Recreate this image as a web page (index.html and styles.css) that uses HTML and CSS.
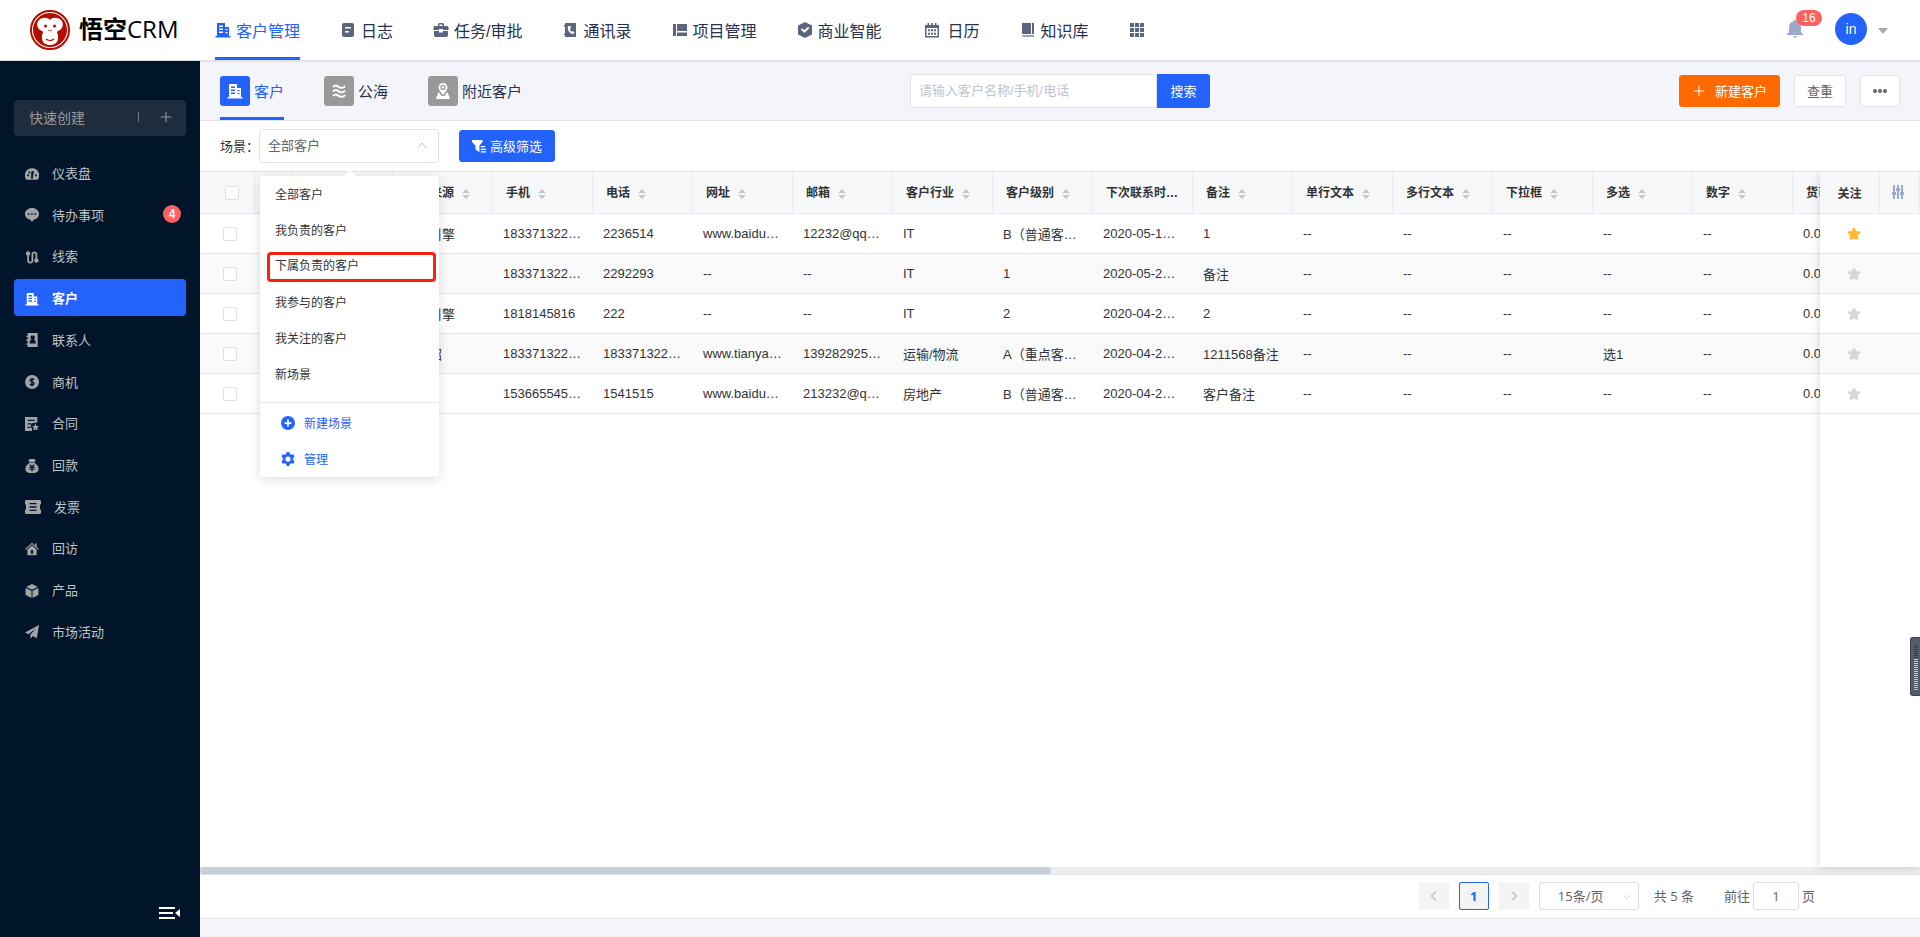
FILE: index.html
```html
<!DOCTYPE html>
<html lang="zh-CN">
<head>
  <meta charset="UTF-8">
  <meta name="viewport" content="width=device-width, initial-scale=1.0">
  <title>悟空CRM</title>
  <link rel="stylesheet" href="styles.css">
</head>
<body>
  <!-- Icon sprite -->
  <svg class="sprite" aria-hidden="true">
    <symbol id="i-building" viewBox="0 0 16 16"><path fill-rule="evenodd" d="M2 1h8v4h4v9h1.500v1.500h-15V14H2zM4 3.500V5h4V3.500zm0 3V8h4V6.500zm0 3V11h4V9.500zM10.500 7v1.300h2V7zm0 3v1.300h2V10z"/></symbol>
    <symbol id="i-log" viewBox="0 0 16 16"><path fill-rule="evenodd" d="M4 1h8a2 2 0 0 1 2 2v10a2 2 0 0 1-2 2H4a2 2 0 0 1-2-2V3a2 2 0 0 1 2-2zm1 4v1.500h6V5zm0 4v1.500h4V9z"/></symbol>
    <symbol id="i-case" viewBox="0 0 16 16"><path fill-rule="evenodd" d="M5 4V2.500A1.500 1.500 0 0 1 6.500 1h3A1.500 1.500 0 0 1 11 2.500V4h3.500l1 1v3H10V7H6v1H.500V5l1-1zm1.500 0h3V2.500h-3zM1 9h5v1.500h4V9h5v4.500L14 15H2l-1-1.500z"/></symbol>
    <symbol id="i-phone" viewBox="0 0 16 16"><path fill-rule="evenodd" d="M3 1h11v14H3v-2H2v-1.500h1v-7H2V3h1zm3 3c-1 4 1.500 8 5.500 8l1-1.800-2-1.200-1 .8C8.500 9.300 8 8 8 7l1-.7L8.300 4z"/></symbol>
    <symbol id="i-project" viewBox="0 0 16 16"><path d="M1 2h3v12H1zM5 2h10v7H5zM5 10.500h10V14H5z"/></symbol>
    <symbol id="i-bi" viewBox="0 0 16 16"><path fill-rule="evenodd" d="M8 0l7 3.500v9L8 16l-7-3.500v-9zM4 7.500l3.300 3.500L12.500 6 11 4.800 7.300 8.300 5.300 6.300z"/></symbol>
    <symbol id="i-calendar" viewBox="0 0 16 16"><path fill-rule="evenodd" d="M3.500 1H5v2h2.200V1h1.600v2H11V1h1.500v2H15v12.500H1V3h2.500zM2.500 6v8h11V6zM4 7.300h2v2H4zm3 0h2v2H7zm3 0h2v2h-2zm-6 3.400h2v2H4zm3 0h2v2H7zm3 0h2v2h-2z"/></symbol>
    <symbol id="i-book" viewBox="0 0 16 16"><path d="M2 1h9v11H2zM12 1h2v11h-2z"/><path opacity=".6" d="M2 13h12v2H3z"/></symbol>
    <symbol id="i-grid" viewBox="0 0 16 16"><path d="M1 1h4v4H1zM6 1h4v4H6zM11 1h4v4h-4zM1 6h4v4H1zM6 6h4v4H6zM11 6h4v4h-4zM1 11h4v4H1zM6 11h4v4H6zM11 11h4v4h-4z"/></symbol>
    <symbol id="i-bell" viewBox="0 0 16 18"><path d="M8 0c1 0 1.500.6 1.500 1.300C12.500 2 14 4.500 14 7.500V12l2 2v1H0v-1l2-2V7.500C2 4.500 3.500 2 6.500 1.300 6.500.6 7 0 8 0zM5.500 16h5L8 18z"/></symbol>
    <symbol id="i-wave" viewBox="0 0 16 16"><path fill="none" stroke="currentColor" stroke-width="2" d="M2 4c3-3 4-1 6 0s4 2 6-1M2 8.500c3-3 4-1 6 0s4 2 6-1M2 13c3-3 4-1 6 0s4 2 6-1"/></symbol>
    <symbol id="i-map" viewBox="0 0 16 18"><path fill-rule="evenodd" d="M8 0a5 5 0 0 1 5 5c0 3-3 5.500-5 8.500C6 10.500 3 8 3 5a5 5 0 0 1 5-5zm0 2a3 3 0 1 0 0 6 3 3 0 0 0 0-6z"/><path d="M3 10l3.500 4.500h3L13 10l3 8H0z"/><circle cx="8" cy="5" r="1.500"/></symbol>
    <symbol id="i-gauge" viewBox="0 0 16 16"><path fill-rule="evenodd" d="M8 1.500A8 8 0 0 1 14.500 14.500h-13A8 8 0 0 1 8 1.500zM2.500 8.500v2h2v-2zM4 5v2h2V5zM11.500 8.500v2h2v-2zM7.300 5L7 11.500v2h2v-2L10.300 4.500z"/></symbol>
    <symbol id="i-chat" viewBox="0 0 16 16"><path fill-rule="evenodd" d="M8 0c4.500 0 8 2.900 8 6.700s-2.500 6.200-6 6.700l-2 2.600-2-2.600c-3.500-.5-6-2.900-6-6.700S3.500 0 8 0zM3.200 6v1.800h1.900V6zm3.800 0v1.800h1.900V6zm3.800 0v1.800h1.900V6z"/></symbol>
    <symbol id="i-clue" viewBox="0 0 16 16"><path fill="none" stroke="currentColor" stroke-width="2" d="M3.500 4v8a2.500 2.500 0 0 0 5 0V4a2.500 2.500 0 0 1 4.500 0v8"/><circle cx="3.500" cy="4" r="2.500"/><circle cx="13" cy="12" r="2.500"/></symbol>
    <symbol id="i-contact" viewBox="0 0 16 16"><path fill-rule="evenodd" d="M3 0h11.500v16H3v-2.500H1.500V12H3V9H1.500V7.500H3V4.500H1.500V3H3zm5.800 3a2.200 2.200 0 0 0-1.200 4.200C6 8 5.300 9.500 5.300 12h7c0-2.500-.7-4-2.300-4.800A2.200 2.200 0 0 0 8.800 3z"/></symbol>
    <symbol id="i-money" viewBox="0 0 16 16"><circle cx="8" cy="8" r="8"/><path fill="none" stroke="#001529" stroke-width="1.500" d="M10.500 5.500C9 4 5.500 4.500 5.700 6.300 6 8.200 10.300 7.600 10.400 9.700c0 2-3.400 2.200-5 .7M8 3v10"/></symbol>
    <symbol id="i-contract" viewBox="0 0 16 16"><path fill-rule="evenodd" d="M0 0h14v6.500h-3a4 4 0 0 0-3 7V16H0zM3 3v1.500h8V3zm0 4v1.500h4.500V7zm0 4v1.500h3V11z"/><path d="M12 7.500l1.200 2.700 2.800.3-2 1.900.5 3.100L12 14l-2.500 1.500.5-3.100-2-1.900 2.800-.3z"/></symbol>
    <symbol id="i-bag" viewBox="0 0 16 16"><path d="M5 0h6l1 2-1 2H5L4 2zM5 4.500h6c2 1 4.500 3.500 4.500 6.500 0 4-3 5-7.500 5S.500 15 .500 11c0-3 2.500-5.500 4.500-6.500z"/><path fill="none" stroke="#001529" stroke-width="1.300" d="M5.500 6.500L8 9l2.500-2.500M5 9.500h6M5 11.700h6M8 9v5"/></symbol>
    <symbol id="i-ticket" viewBox="0 0 16 14"><path fill-rule="evenodd" d="M1 0h14l1 1v3l-1 1v4l1 1v3l-1 1H1l-1-1v-3l1-1V5L0 4V1zm3.500 3v1.300h7V3zm0 3.300v1.400h7V6.300zm0 3.400V11h7V9.700z"/></symbol>
    <symbol id="i-home" viewBox="0 0 18 16"><path d="M9 0l4 3.500V1h2v4.300L18 8l-1 1-8-7-8 7-1-1z"/><path fill-rule="evenodd" d="M9 3.500l6 5.200V16H3V8.700zM7.500 9.500v4.500h3V9.500z"/></symbol>
    <symbol id="i-box" viewBox="0 0 16 16"><path d="M8 0l6.700 3.300L8 6.700 1.300 3.300zM.700 4.500l6.700 3.300V16L.700 12.500zM15.300 4.500v8L8.600 16V7.800z"/></symbol>
    <symbol id="i-plane" viewBox="0 0 16 16"><path d="M16 0l-2.500 15-5-2.500L6.500 16 6 11l6.500-7L4 10.500 0 8.500z"/></symbol>
    <symbol id="i-filter" viewBox="0 0 16 16"><path d="M0 1h12v2.500L8.500 7.500V15L4 12V7.500L0 3.500zM10 8h5v1.500h-5zM10 11h6v1.500h-6zM10 14h6v1.500h-6z"/></symbol>
    <symbol id="i-plus" viewBox="0 0 16 16"><path d="M7.400 2h1.200v5.400H14v1.200H8.600V14H7.400V8.600H2V7.400h5.400z"/></symbol>
    <symbol id="i-addc" viewBox="0 0 16 16"><path fill-rule="evenodd" d="M8 0a8 8 0 1 1 0 16A8 8 0 0 1 8 0zM7 4v3H4v2h3v3h2V9h3V7H9V4z"/></symbol>
    <symbol id="i-gear" viewBox="0 0 16 16"><path fill-rule="evenodd" d="M6.500 0h3l.6 2.200 1.600 1L14 2.600 15.500 5l-1.600 1.800v2.400L15.500 11 14 13.400l-2.300-.6-1.600 1-.6 2.200h-3l-.6-2.200-1.600-1-2.300.6L.500 11l1.600-1.800V6.800L.500 5 2 2.600l2.300.6 1.600-1zM8 5a3 3 0 1 0 0 6 3 3 0 0 0 0-6z"/></symbol>
    <symbol id="i-star" viewBox="0 0 16 16"><path stroke="currentColor" stroke-width="2" stroke-linejoin="round" d="M8 1.500l1.900 4 4.600.6-3.300 3.100.8 4.500-4-1.100-4 1.100.8-4.500L1.500 6.100l4.600-.6z"/></symbol>
    <symbol id="i-sort" viewBox="0 0 8 10"><path d="M4 0l4 4H0zM0 6h8l-4 4z"/></symbol>
    <symbol id="i-up" viewBox="0 0 12 12"><path fill="none" stroke="currentColor" d="M2 8l4-5 4 5"/></symbol>
    <symbol id="i-down" viewBox="0 0 12 12"><path fill="none" stroke="currentColor" d="M2 4l4 4 4-4"/></symbol>
    <symbol id="i-left" viewBox="0 0 12 12"><path fill="none" stroke="currentColor" stroke-width="2" d="M8 1L3 6l5 5"/></symbol>
    <symbol id="i-right" viewBox="0 0 12 12"><path fill="none" stroke="currentColor" stroke-width="2" d="M4 1l5 5-5 5"/></symbol>
    <symbol id="i-set" viewBox="0 0 12 14"><path d="M1 0h2v14H1zM5 0h2v14H5zM9 0h2v14H9zM0 7h4v3H0zM4 3h4v3H4zM8 7h4v3H8z"/></symbol>
    <symbol id="i-fold" viewBox="0 0 22 12"><path d="M0 0h16v2H0zM0 5h14v2H0zM0 10h16v2H0zM21 2v8l-5-4z"/></symbol>
  </svg>

  <header class="header">
    <a href="#" class="logo">
      <svg width="40" height="40" viewBox="0 0 40 40">
        <circle cx="20" cy="20" r="19" fill="#fff" stroke="#b50d00" stroke-width="2"/>
        <circle cx="20" cy="20" r="17" fill="#b50d00"/>
        <path fill="#fff" d="M20 10c2-3 8-3 11 0 3 3 2 8-1 10-2 1-3 1-3 3 1 1 1 2 1 5 0 5-4 7-8 7s-8-2-8-7c0-3 0-4 1-5 0-2-1-2-3-3-3-2-4-7-1-10 3-3 9-3 11 0z"/>
        <g fill="#b50d00"><circle cx="15.500" cy="16" r="1.500"/><circle cx="24.500" cy="16" r="1.500"/><circle cx="19" cy="20.500" r=".7"/><circle cx="21" cy="20.500" r=".7"/></g>
        <path fill="none" stroke="#b50d00" stroke-width="1.200" d="M16 29q4 3 8 0"/>
      </svg>
      <span><b>悟空</b>CRM</span>
    </a>
    <nav class="nav">
      <a href="#" class="active"><svg><use href="#i-building"/></svg>客户管理</a>
      <a href="#"><svg><use href="#i-log"/></svg>日志</a>
      <a href="#"><svg><use href="#i-case"/></svg>任务/审批</a>
      <a href="#"><svg><use href="#i-phone"/></svg>通讯录</a>
      <a href="#"><svg><use href="#i-project"/></svg>项目管理</a>
      <a href="#"><svg><use href="#i-bi"/></svg>商业智能</a>
      <a href="#" class="spaced"><svg><use href="#i-calendar"/></svg>日历</a>
      <a href="#"><svg><use href="#i-book"/></svg>知识库</a>
      <a href="#" aria-label="更多"><svg><use href="#i-grid"/></svg></a>
    </nav>
    <div class="user">
      <button class="bell" aria-label="消息"><svg><use href="#i-bell"/></svg><span class="bell-count">16</span></button>
      <span class="avatar">in</span>
      <span class="caret"></span>
    </div>
  </header>

  <div class="layout">
    <aside class="sidebar">
      <button class="quick">快速创建<i></i><svg><use href="#i-plus"/></svg></button>
      <nav class="menu">
        <a href="#"><svg><use href="#i-gauge"/></svg>仪表盘</a>
        <a href="#"><svg><use href="#i-chat"/></svg>待办事项<span class="badge">4</span></a>
        <a href="#"><svg><use href="#i-clue"/></svg>线索</a>
        <a href="#" class="active"><svg><use href="#i-building"/></svg>客户</a>
        <a href="#"><svg><use href="#i-contact"/></svg>联系人</a>
        <a href="#"><svg><use href="#i-money"/></svg>商机</a>
        <a href="#"><svg><use href="#i-contract"/></svg>合同</a>
        <a href="#"><svg><use href="#i-bag"/></svg>回款</a>
        <a href="#"><svg class="wide"><use href="#i-ticket"/></svg>发票</a>
        <a href="#"><svg><use href="#i-home"/></svg>回访</a>
        <a href="#"><svg><use href="#i-box"/></svg>产品</a>
        <a href="#"><svg><use href="#i-plane"/></svg>市场活动</a>
      </nav>
      <button class="fold" aria-label="收起"><svg><use href="#i-fold"/></svg></button>
    </aside>

    <main class="main">
      <div class="tabbar">
        <div class="tabs">
          <a href="#" class="active"><span><svg><use href="#i-building"/></svg></span>客户</a>
          <a href="#"><span><svg><use href="#i-wave"/></svg></span>公海</a>
          <a href="#"><span><svg><use href="#i-map"/></svg></span>附近客户</a>
        </div>
        <form class="search">
          <input type="text" placeholder="请输入客户名称/手机/电话" aria-label="搜索客户">
          <button type="button">搜索</button>
        </form>
        <div class="actions">
          <button class="btn btn-orange"><svg><use href="#i-plus"/></svg>新建客户</button>
          <button class="btn">查重</button>
          <button class="btn btn-more" aria-label="更多操作"><i></i><i></i><i></i></button>
        </div>
      </div>

      <div class="filter">
        <label for="scene">场景：</label>
        <div class="scene">
          <select id="scene"><option>全部客户</option></select>
          <svg><use href="#i-up"/></svg>
          <div class="dropdown">
            <ul>
              <li>全部客户</li>
              <li>我负责的客户</li>
              <li class="marked">下属负责的客户</li>
              <li>我参与的客户</li>
              <li>我关注的客户</li>
              <li>新场景</li>
            </ul>
            <div class="dropdown-foot">
              <button><svg><use href="#i-addc"/></svg>新建场景</button>
              <button><svg><use href="#i-gear"/></svg>管理</button>
            </div>
          </div>
        </div>
        <button class="btn btn-blue"><svg><use href="#i-filter"/></svg>高级筛选</button>
      </div>

      <div class="table-area">
        <div class="table-scroll">
          <table class="grid">
            <colgroup><col class="col-check"><col class="col-lock"><col span="16" class="col-data"></colgroup>
            <thead>
              <tr>
                <th class="check"><input type="checkbox" aria-label="全选"></th><th></th><th></th>
                <th>客户来源<svg><use href="#i-sort"/></svg></th>
                <th>手机<svg><use href="#i-sort"/></svg></th>
                <th>电话<svg><use href="#i-sort"/></svg></th>
                <th>网址<svg><use href="#i-sort"/></svg></th>
                <th>邮箱<svg><use href="#i-sort"/></svg></th>
                <th>客户行业<svg><use href="#i-sort"/></svg></th>
                <th>客户级别<svg><use href="#i-sort"/></svg></th>
                <th>下次联系时…</th>
                <th>备注<svg><use href="#i-sort"/></svg></th>
                <th>单行文本<svg><use href="#i-sort"/></svg></th>
                <th>多行文本<svg><use href="#i-sort"/></svg></th>
                <th>下拉框<svg><use href="#i-sort"/></svg></th>
                <th>多选<svg><use href="#i-sort"/></svg></th>
                <th>数字<svg><use href="#i-sort"/></svg></th>
                <th>货币</th>
              </tr>
            </thead>
            <tbody>
              <tr><td class="check"><input type="checkbox" aria-label="选择"></td><td></td><td></td><td>搜索引擎</td><td>183371322…</td><td>2236514</td><td>www.baidu…</td><td>12232@qq…</td><td>IT</td><td>B（普通客…</td><td>2020-05-1…</td><td>1</td><td>--</td><td>--</td><td>--</td><td>--</td><td>--</td><td>0.00</td></tr>
              <tr><td class="check"><input type="checkbox" aria-label="选择"></td><td></td><td></td><td></td><td>183371322…</td><td>2292293</td><td>--</td><td>--</td><td>IT</td><td>1</td><td>2020-05-2…</td><td>备注</td><td>--</td><td>--</td><td>--</td><td>--</td><td>--</td><td>0.00</td></tr>
              <tr><td class="check"><input type="checkbox" aria-label="选择"></td><td></td><td></td><td>搜索引擎</td><td>1818145816</td><td>222</td><td>--</td><td>--</td><td>IT</td><td>2</td><td>2020-04-2…</td><td>2</td><td>--</td><td>--</td><td>--</td><td>--</td><td>--</td><td>0.00</td></tr>
              <tr><td class="check"><input type="checkbox" aria-label="选择"></td><td></td><td></td><td>转介绍</td><td>183371322…</td><td>183371322…</td><td>www.tianya…</td><td>139282925…</td><td>运输/物流</td><td>A（重点客…</td><td>2020-04-2…</td><td>1211568备注</td><td>--</td><td>--</td><td>--</td><td>选1</td><td>--</td><td>0.00</td></tr>
              <tr><td class="check"><input type="checkbox" aria-label="选择"></td><td></td><td></td><td></td><td>153665545…</td><td>1541515</td><td>www.baidu…</td><td>213232@q…</td><td>房地产</td><td>B（普通客…</td><td>2020-04-2…</td><td>客户备注</td><td>--</td><td>--</td><td>--</td><td>--</td><td>--</td><td>0.00</td></tr>
            </tbody>
          </table>
        </div>
        <div class="table-fixed">
          <table class="grid">
            <colgroup><col class="col-follow"><col class="col-set"></colgroup>
            <thead><tr><th>关注</th><th><svg class="set"><use href="#i-set"/></svg></th></tr></thead>
            <tbody>
              <tr><td><svg class="star on"><use href="#i-star"/></svg></td><td></td></tr>
              <tr><td><svg class="star"><use href="#i-star"/></svg></td><td></td></tr>
              <tr><td><svg class="star"><use href="#i-star"/></svg></td><td></td></tr>
              <tr><td><svg class="star"><use href="#i-star"/></svg></td><td></td></tr>
              <tr><td><svg class="star"><use href="#i-star"/></svg></td><td></td></tr>
            </tbody>
          </table>
        </div>
      </div>
      <div class="scrollbar"><div class="scrollbar-thumb"></div></div>

      <div class="pager">
        <button aria-label="上一页"><svg><use href="#i-left"/></svg></button>
        <button class="current">1</button>
        <button aria-label="下一页"><svg><use href="#i-right"/></svg></button>
        <div class="page-size">
          <select aria-label="每页条数"><option>15条/页</option></select>
          <svg><use href="#i-down"/></svg>
        </div>
        <span class="total">共 5 条</span>
        <label class="jump">前往<input type="text" value="1">页</label>
      </div>
    </main>
  </div>

  <div class="meter"><div class="meter-off"></div><div class="meter-on"></div></div>
</body>
</html>
```
FILE: styles.css
```css
* {
  box-sizing: border-box;
}
body {
  margin: 0;
  min-height: 100vh;
  display: flex;
  flex-direction: column;
  font-family: "Liberation Sans", "Noto Sans CJK SC", sans-serif;
  font-size: 13px;
  color: #333;
  background: #f4f5fa;
}
a {
  color: inherit;
  text-decoration: none;
}
button, input, select {
  font: inherit;
  color: inherit;
  margin: 0;
}
button {
  border: none;
  background: none;
  padding: 0;
  cursor: pointer;
}
select {
  appearance: none;
}
svg {
  fill: currentColor;
  flex: none;
}
.sprite {
  display: none;
}

/* Header */
.header {
  display: flex;
  height: 61px;
  background: #fff;
  border-bottom: 1px solid #dfe0e3;
  box-shadow: 0 1px 2px rgba(0, 0, 0, 0.08);
  position: relative;
}
.logo {
  display: flex;
  align-items: center;
  width: 215px;
  padding-left: 30px;
  gap: 9px;
  font-family: "Open Sans", "Noto Sans CJK SC", sans-serif;
  font-size: 24px;
  font-weight: 500;
  line-height: 30px;
  color: #000;
}
.logo span {
  padding-bottom: 2px;
}
.nav {
  display: flex;
  gap: 40px;
  font-size: 16px;
  color: #2a304d;
}
.nav a {
  display: flex;
  align-items: center;
  gap: 5px;
  border-bottom: 3px solid transparent;
  padding-top: 2px;
}
.nav .spaced {
  gap: 8px;
  margin-left: 2px;
}
.nav svg {
  width: 16px;
  height: 16px;
  color: #5d6480;
}
.nav .active {
  color: #2362fb;
  border-color: #2362fb;
}
.nav .active svg {
  color: #2362fb;
}
.user {
  display: flex;
  align-items: center;
  margin-left: auto;
  padding: 0 32px 2px 0;
}
.bell {
  position: relative;
  height: 18px;
  color: #9da9c6;
}
.bell svg {
  display: block;
  width: 16px;
  height: 18px;
}
.bell-count {
  position: absolute;
  left: 9px;
  top: -10px;
  width: 26px;
  height: 16px;
  border-radius: 8px;
  background: #ff6060;
  color: #fff;
  font-size: 12px;
  line-height: 16px;
}
.avatar {
  width: 32px;
  height: 32px;
  margin-left: 32px;
  border-radius: 50%;
  background: #2362fb;
  color: #fff;
  font-size: 14px;
  line-height: 32px;
  text-align: center;
}
.caret {
  margin: 3px 0 0 11px;
  border: 5px solid transparent;
  border-top: 6px solid #aaa;
  border-bottom: none;
}

.layout {
  flex: 1;
  display: flex;
}

/* Sidebar */
.sidebar {
  width: 200px;
  flex: none;
  display: flex;
  flex-direction: column;
  padding: 39px 14px 18px;
  background: #001529;
  color: #bec3c8;
}
.quick {
  display: flex;
  align-items: center;
  height: 36px;
  padding: 0 13px 2px 15px;
  border-radius: 4px;
  background: #1d2d3d;
  color: #999;
  font-size: 14px;
}
.quick i {
  width: 1px;
  height: 10px;
  margin: 0 20px 0 auto;
  background: #778;
}
.quick svg {
  width: 14px;
  height: 14px;
}
.menu {
  display: flex;
  flex-direction: column;
  justify-content: space-between;
  height: 496px;
  margin-top: 18px;
}
.menu a {
  display: flex;
  align-items: center;
  height: 37px;
  padding: 0 5px 0 11px;
  border-radius: 4px;
}
.menu svg {
  width: 14px;
  height: 14px;
  margin: 2px 13px 0 0;
  color: #a2a4a6;
}
.menu .wide {
  width: 16px;
}
.menu .active {
  background: #2362fb;
  color: #fff;
  font-weight: bold;
}
.menu .active svg {
  color: #fff;
}
.badge {
  width: 18px;
  height: 18px;
  margin-left: auto;
  border-radius: 50%;
  background: #ff6060;
  color: #fff;
  font-size: 12px;
  font-weight: bold;
  line-height: 18px;
  text-align: center;
}
.fold {
  margin: auto 5px 0 auto;
  color: #fff;
}
.fold svg {
  display: block;
  width: 22px;
  height: 12px;
}

/* Main */
.main {
  flex: 1;
  min-width: 0;
  display: flex;
  flex-direction: column;
  padding-bottom: 18px;
}
.tabbar {
  display: flex;
  height: 60px;
  padding: 0 20px;
  border-bottom: 1px solid #e6e6e6;
}
.tabs {
  flex: 1;
  display: flex;
  gap: 40px;
  font-size: 15px;
  color: #2a304d;
}
.tabs a {
  display: flex;
  align-items: center;
  gap: 4px;
  padding-top: 3px;
  border-bottom: 3px solid transparent;
}
.tabs span {
  display: flex;
  align-items: center;
  justify-content: center;
  width: 30px;
  height: 30px;
  border-radius: 3px;
  background: #999;
  color: #fff;
}
.tabs svg {
  width: 16px;
  height: 16px;
}
.tabs .active {
  color: #2362fb;
  border-color: #2362fb;
}
.tabs .active span {
  background: #2362fb;
}
.search {
  display: flex;
  align-self: center;
  width: 300px;
  height: 34px;
}
.search input {
  flex: 1;
  min-width: 0;
  padding: 0 8px;
  border: 1px solid #e1e3e8;
  border-radius: 3px 0 0 3px;
  background: #fff;
}
.search input::placeholder {
  color: #c0c4cc;
}
.search button {
  width: 53px;
  border-radius: 0 3px 3px 0;
  background: #2362fb;
  color: #fff;
}
.actions {
  flex: 1;
  display: flex;
  align-items: center;
  justify-content: flex-end;
  gap: 14px;
}
.btn {
  display: flex;
  align-items: center;
  height: 32px;
  padding: 0 12px;
  border: 1px solid #e1e3e8;
  border-radius: 3px;
  background: #fff;
  color: #666;
}
.btn svg {
  width: 14px;
  height: 14px;
  margin-right: 4px;
}
.btn-orange {
  border-color: #ff6a00;
  background: #ff6a00;
  color: #fff;
}
.btn-orange svg {
  margin-right: 9px;
}
.btn-blue {
  margin-left: 20px;
  border-color: #2362fb;
  background: #2362fb;
  color: #fff;
}
.btn-more {
  gap: 1px;
}
.btn-more i {
  width: 4px;
  height: 4px;
  border-radius: 50%;
  background: #666;
}

.filter {
  display: flex;
  align-items: center;
  height: 51px;
  padding: 0 20px 1px;
  border-bottom: 1px solid #e6e6e6;
  background: #fff;
}
.scene {
  position: relative;
  width: 180px;
}
.scene select {
  display: block;
  width: 100%;
  height: 34px;
  padding: 0 8px;
  border: 1px solid #e1e3e8;
  border-radius: 3px;
  background: #fff;
  color: #666;
}
.scene > svg {
  position: absolute;
  right: 11px;
  top: 11px;
  width: 12px;
  height: 12px;
  color: #c0c4cc;
}
.dropdown {
  position: absolute;
  z-index: 5;
  left: 1px;
  top: 47px;
  width: 179px;
  border-radius: 3px;
  background: #fff;
  box-shadow: 0 2px 12px rgba(0, 0, 0, 0.14);
  font-size: 12px;
}
.dropdown::before {
  content: "";
  position: absolute;
  left: 84px;
  top: -6px;
  border: 6px solid transparent;
  border-top: none;
  border-bottom-color: #fff;
}
.dropdown ul {
  list-style: none;
  margin: 0;
  padding: 4px 3px 6px 7px;
}
.dropdown li {
  height: 30px;
  margin-bottom: 6px;
  padding-left: 8px;
  line-height: 30px;
}
.dropdown .marked {
  border: 3px solid #ff1e12;
  border-radius: 4px;
  padding-left: 5px;
  line-height: 22px;
}
.dropdown-foot {
  padding: 2px 0 0;
  border-top: 1px solid #e6e6e6;
}
.dropdown-foot button {
  display: flex;
  align-items: center;
  gap: 9px;
  width: 100%;
  height: 36px;
  padding-left: 21px;
  color: #2362fb;
}
.dropdown-foot svg {
  width: 14px;
  height: 14px;
}

/* Customer table */
.table-area {
  flex: 1;
  display: flex;
  background: #fff;
}
.table-scroll {
  flex: 1;
  width: 0;
  overflow: hidden;
}
.table-fixed {
  position: relative;
  width: 100px;
  background: #fff;
  box-shadow: 0 0 10px rgba(0, 0, 0, 0.16);
  clip-path: inset(0 0 -10px -12px);
}
.grid {
  table-layout: fixed;
  width: 100%;
  border-collapse: separate;
  border-spacing: 0;
}
.table-scroll .grid {
  width: 1693px;
}
.col-check { width: 55px; }
.col-lock { width: 38px; }
.col-data { width: 100px; }
.col-follow { width: 60px; }
.col-set { width: 40px; }
.grid th, .grid td {
  padding: 0 0 0 10px;
  text-align: left;
  white-space: nowrap;
  overflow: hidden;
  border-bottom: 1px solid #e6e6e6;
}
.grid th {
  height: 42px;
  padding: 0 0 3px 13px;
  border-right: 1px solid #e8ebf2;
  background: #f6f8fa;
  font-size: 12px;
}
.grid td {
  height: 40px;
}
.grid tbody tr:nth-child(even) {
  background: #fafafa;
}
.grid th svg {
  width: 8px;
  height: 10px;
  margin-left: 8px;
  vertical-align: -2px;
  color: #c0c4cc;
}
.grid td.check {
  padding-left: 23px;
}
.grid th.check {
  padding: 0 0 0 25px;
}
.check input {
  appearance: none;
  display: block;
  width: 14px;
  height: 14px;
  border: 1px solid #dcdfe6;
  border-radius: 2px;
  background: #fff;
}
.table-fixed .grid th, .table-fixed .grid td {
  padding: 0;
  text-align: center;
}
.grid th .set {
  width: 12px;
  height: 14px;
  margin: 0 4px 0 0;
  color: #9da9c6;
}
.star {
  width: 14px;
  height: 14px;
  margin-left: 8px;
  vertical-align: middle;
  color: #d8d8d8;
}
.star.on {
  color: #fcba38;
}
.scrollbar {
  height: 8px;
  border-bottom: 1px solid #e1e1e1;
  background: #eee;
}
.scrollbar-thumb {
  width: 49.5%;
  height: 7px;
  border-radius: 4px;
  background: #c6d0d9;
}

/* Pagination */
.pager {
  display: flex;
  align-items: center;
  justify-content: flex-end;
  height: 44px;
  padding: 0 105px 2px 0;
  border-bottom: 1px solid #e6e6e6;
  background: #fff;
  font-family: "Open Sans", "Noto Sans CJK SC", sans-serif;
  color: #606266;
}
.pager button {
  width: 30px;
  height: 28px;
  margin-right: 10px;
  border-radius: 2px;
  background: #f4f4f5;
  color: #c0c4cc;
}
.pager svg {
  width: 10px;
  height: 10px;
}
.pager .current {
  border: 1px solid #2362fb;
  color: #2362fb;
  font-weight: bold;
}
.page-size {
  position: relative;
  width: 100px;
}
.page-size select {
  display: block;
  width: 100%;
  height: 28px;
  padding: 0 18px;
  border: 1px solid #dcdfe6;
  border-radius: 3px;
  background: #fff;
}
.page-size svg {
  position: absolute;
  right: 7px;
  top: 10px;
  color: #c0c4cc;
}
.total {
  margin: 0 30px 0 15px;
}
.jump {
  display: flex;
  align-items: center;
  gap: 3px;
}
.jump input {
  width: 46px;
  height: 28px;
  border: 1px solid #dcdfe6;
  border-radius: 3px;
  text-align: center;
}

/* Level meter docked on the right edge */
.meter {
  position: fixed;
  right: 0;
  top: 637px;
  width: 10px;
  height: 59px;
  padding: 7px 2px 7px 3px;
  border: 1px solid #3c414d;
  border-right: none;
  border-radius: 3px 0 0 3px;
  background: #555b6b;
}
.meter-off {
  height: 14px;
  background: repeating-linear-gradient(#363b47 0 1px, transparent 1px 2px);
}
.meter-on {
  height: 31px;
  background: repeating-linear-gradient(transparent 0 1px, #555b6b 1px 2px), linear-gradient(#ffc83c, #c8e650, #50f0d2);
}
```
